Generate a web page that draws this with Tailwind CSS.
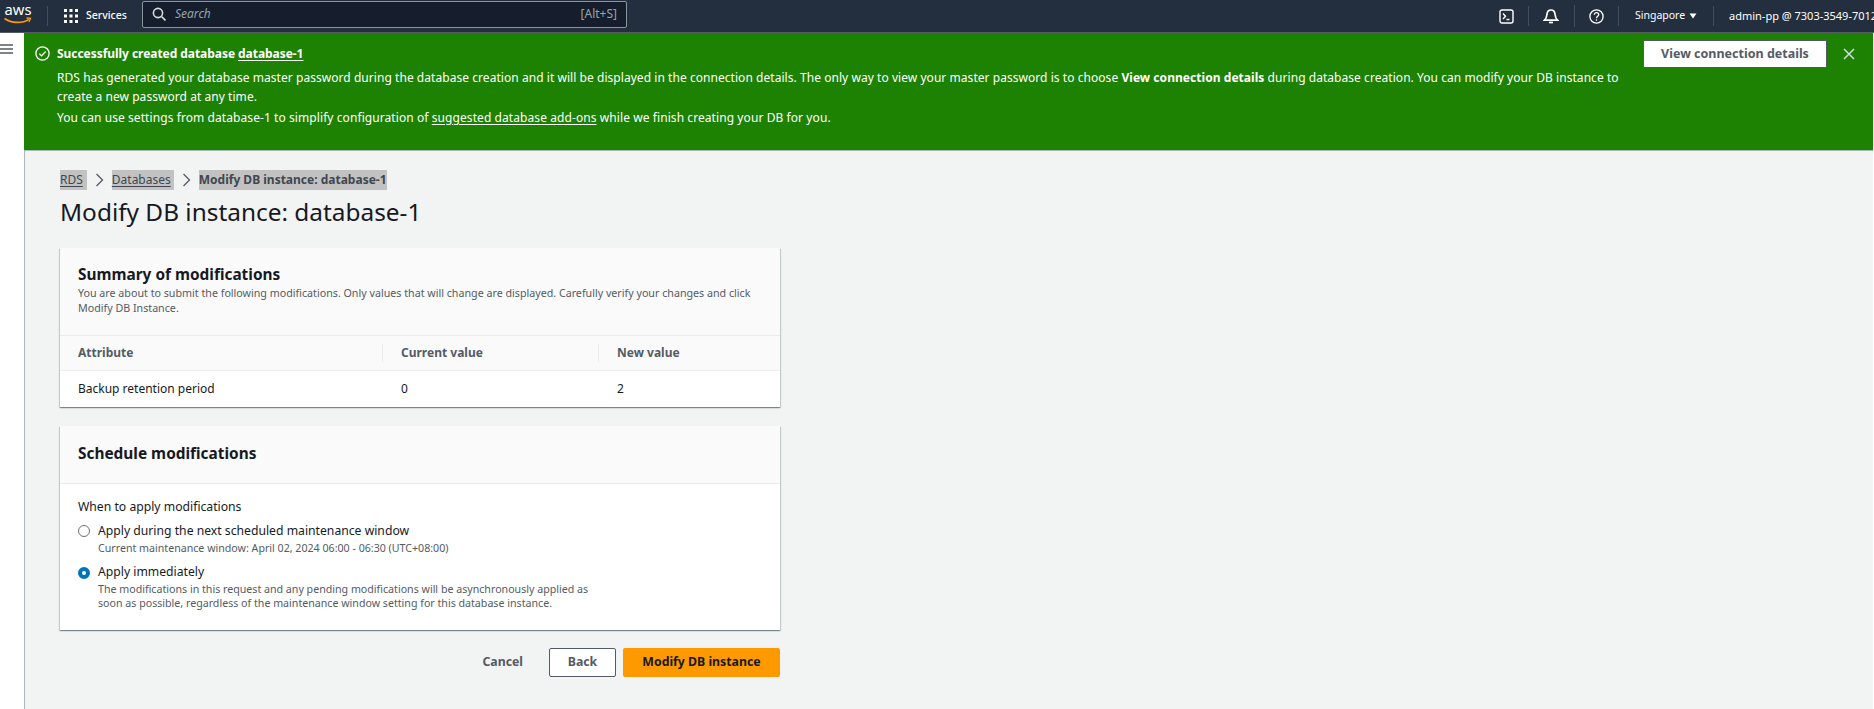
<!doctype html>
<html>
<head>
  <meta charset="UTF-8">
  <meta name="viewport" content="width=device-width, initial-scale=1.0">
  <script src="https://cdn.jsdelivr.net/npm/@tailwindcss/browser@4"></script>
</head>
<body class="bg-white h-[709px] overflow-hidden font-['Noto_Sans',sans-serif] text-[14px] text-[#16191f]">
<!-- top nav -->
<div class="h-[33px] bg-[#232f3e] border-b border-[#545b64] flex items-center text-white overflow-hidden whitespace-nowrap">
  <div class="w-[35px] pl-[4px] shrink-0">
    <svg class="overflow-visible" width="30" height="24" viewBox="0 0 30 24"><text x="0.5" y="11" font-size="15" textLength="27" lengthAdjust="spacingAndGlyphs" fill="#fff" font-family="Noto Sans">aws</text><path d="M0.500 14.500c7 5 18 5 24.500 0.800" fill="none" stroke="#f90" stroke-width="1.600"/><path d="M22.500 14l4 0.400-1.500 3.600" fill="none" stroke="#f90" stroke-width="1.300"/></svg>
  </div>
  <div class="w-px h-[20px] bg-[#414d5c] ml-[12px] shrink-0"></div>
  <svg class="ml-[16px] shrink-0" width="14" height="14" viewBox="0 0 14 14" fill="#fff"><rect x="0" y="0" width="3" height="3"/><rect x="5.500" y="0" width="3" height="3"/><rect x="11" y="0" width="3" height="3"/><rect x="0" y="5.500" width="3" height="3"/><rect x="5.500" y="5.500" width="3" height="3"/><rect x="11" y="5.500" width="3" height="3"/><rect x="0" y="11" width="3" height="3"/><rect x="5.500" y="11" width="3" height="3"/><rect x="11" y="11" width="3" height="3"/></svg>
  <span class="ml-[8px] text-[10.500px] font-medium w-[43px]">Services</span>
  <div class="ml-[13px] w-[485px] h-[27px] -mt-[4px] bg-[#161e2d] border border-[#879596] rounded-[2px] flex items-center px-[9px] shrink-0">
    <svg width="14" height="14" viewBox="0 0 14 14" fill="none" stroke="#d5dbdb" stroke-width="1.600"><circle cx="6" cy="6" r="4.600"/><path d="M9.500 9.500L13.500 13.500"/></svg>
    <span class="ml-[9px] italic text-[12px] text-[#95a5a6]">Search</span>
    <span class="ml-auto text-[12px] text-[#95a5a6]">[Alt+S]</span>
  </div>
  <div class="flex-1"></div>
  <svg class="shrink-0" width="15" height="15" viewBox="0 0 15 15" fill="none" stroke="#fff" stroke-width="1.400"><rect x="1" y="1" width="13" height="13" rx="2"/><path d="M4 4.500l2.500 2.800L4 10M7.500 10.500h3"/></svg>
  <div class="w-px h-[20px] bg-[#414d5c] ml-[14px] shrink-0"></div>
  <svg class="ml-[14px] shrink-0" width="16" height="16" viewBox="0 0 16 16" fill="none" stroke="#fff" stroke-width="1.700"><path d="M1.500 12.200h13c-2-2-2.200-3.200-2.400-5.500C11.900 4 10.300 2 8 2S4.100 4 3.900 6.700c-.2 2.300-.4 3.500-2.400 5.500z"/><path d="M6 14.500h4"/></svg>
  <div class="w-px h-[22px] bg-[#414d5c] ml-[15px] shrink-0"></div>
  <svg class="ml-[14px] shrink-0" width="15" height="15" viewBox="0 0 15 15" fill="none" stroke="#fff" stroke-width="1.300"><circle cx="7.500" cy="7.500" r="6.600"/><path d="M5.300 5.800c0-1.300 1-2.100 2.200-2.100s2.200.8 2.200 2c0 1.600-2.200 1.700-2.200 3.500"/><path d="M7.500 10.300v1.400"/></svg>
  <div class="w-px h-[20px] bg-[#414d5c] ml-[14px] shrink-0"></div>
  <span class="ml-[16px] w-[50px] text-[10.500px]">Singapore</span>
  <svg class="ml-[4px] shrink-0" width="8" height="6" viewBox="0 0 8 6" fill="#fff"><path d="M0.500 0.500h7L4 5.500z"/></svg>
  <div class="w-px h-[20px] bg-[#414d5c] ml-[16px] shrink-0"></div>
  <div class="ml-[15px] w-[145px] shrink-0 overflow-hidden text-[11px]">admin-pp @ 7303-3549-7012</div>
</div>

<div class="flex h-[676px]">
  <!-- sidebar strip -->
  <div class="w-[25px] shrink-0 border-r border-[#aab7b8] pt-[11px]">
    <svg width="13" height="10" viewBox="0 0 13 10" stroke="#545b64" stroke-width="1.600"><path d="M0 1h13M0 5h13M0 9h13"/></svg>
  </div>
  <div class="flex-1 bg-[#f2f3f3] mr-px">
    <!-- flash -->
    <div class="-ml-px h-[118px] bg-[#1d8102] border-b border-[#aab7b8] flex text-white pl-[10px]">
      <svg class="mt-[13px] ml-[1px] shrink-0" width="15" height="15" viewBox="0 0 15 15" fill="none" stroke="#fff" stroke-width="1.300"><circle cx="7.500" cy="7.500" r="6.600"/><path d="M4.400 7.700l2.200 2.200 4-4.400"/></svg>
      <div class="ml-[7px] flex-1 pt-[11px] text-[12px] leading-[20px] tracking-[0.05px]">
        <div class="font-bold h-[24px] tracking-[-0.05px]">Successfully created database <span class="underline underline-offset-2">database-1</span></div>
        <div class="w-[1575px] leading-[19px]">RDS has generated your database master password during the database creation and it will be displayed in the connection details. The only way to view your master password is to choose <b>View connection details</b> during database creation. You can modify your DB instance to create a new password at any time.</div>
        <div class="mt-[3px] leading-[18px] tracking-[0.08px]">You can use settings from database-1 to simplify configuration of <span class="underline underline-offset-2">suggested database add-ons</span> while we finish creating your DB for you.</div>
      </div>
      <div class="mt-[7px] w-[184px] h-[28px] bg-white border border-[#545b64] flex items-center justify-center text-[12.500px] font-bold text-[#545b64] shrink-0">View connection details</div>
      <svg class="mt-[15px] ml-[16px] mr-[18px] shrink-0" width="12" height="12" viewBox="0 0 12 12" stroke="#d5dbdb" stroke-width="1.500"><path d="M1 1l10 10M11 1L1 11"/></svg>
    </div>
    <!-- content -->
    <div class="pl-[35px] w-[755px]">
      <div class="flex items-center h-[20px] mt-[19px] text-[12px] leading-[20px]">
        <span class="bg-[#c2c2c2] pr-[4px] underline underline-offset-2 text-[#414750]">RDS</span>
        <svg class="mx-[8px]" width="9" height="14" viewBox="0 0 9 14" fill="none" stroke="#545b64" stroke-width="1.300"><path d="M1.500 1l6 6-6 6"/></svg>
        <span class="bg-[#c2c2c2] pr-[3px] underline underline-offset-2 text-[#414750]">Databases</span>
        <svg class="mx-[8px]" width="9" height="14" viewBox="0 0 9 14" fill="none" stroke="#545b64" stroke-width="1.300"><path d="M1.500 1l6 6-6 6"/></svg>
        <span class="bg-[#c2c2c2] font-bold text-[#414750]">Modify DB instance: database-1</span>
      </div>
      <h1 class="text-[24.400px] leading-[32px] mt-[6px] font-normal">Modify DB instance: database-1</h1>

      <div class="mt-[20px] bg-white shadow-[0_1px_1px_0_rgba(0,28,36,0.3),1px_1px_1px_0_rgba(0,28,36,0.15),-1px_1px_1px_0_rgba(0,28,36,0.15)]">
        <div class="h-[88px] bg-[#fafafa] border-b border-[#eaeded] px-[18px] pt-[16px]">
          <div class="text-[15.400px] font-bold leading-[22px]">Summary of modifications</div>
          <div class="text-[10.700px] leading-[15px] text-[#545b64]">You are about to submit the following modifications. Only values that will change are displayed. Carefully verify your changes and click Modify DB Instance.</div>
        </div>
        <div class="h-[35px] bg-[#fafafa] border-b border-[#eaeded] flex items-center text-[12px] font-bold text-[#545b64]">
          <div class="w-[323px] pl-[18px] border-r border-[#eaeded] h-[18px] leading-[18px]">Attribute</div>
          <div class="w-[216px] pl-[18px] border-r border-[#eaeded] h-[18px] leading-[18px]">Current value</div>
          <div class="pl-[18px] leading-[18px]">New value</div>
        </div>
        <div class="h-[36px] pb-[1px] flex items-center text-[12px]">
          <div class="w-[323px] pl-[18px]">Backup retention period</div>
          <div class="w-[216px] pl-[18px]">0</div>
          <div class="pl-[18px]">2</div>
        </div>
      </div>

      <div class="mt-[19px] bg-white shadow-[0_1px_1px_0_rgba(0,28,36,0.3),1px_1px_1px_0_rgba(0,28,36,0.15),-1px_1px_1px_0_rgba(0,28,36,0.15)] h-[204px]">
        <div class="h-[58px] pb-[2px] bg-[#fafafa] border-b border-[#eaeded] px-[18px] flex items-center text-[15.400px] font-bold">Schedule modifications</div>
        <div class="px-[18px] pt-[13px] text-[12.200px]">
          <div class="leading-[20px]">When to apply modifications</div>
          <div class="flex mt-[4px]">
            <div class="mt-[4px] w-[12px] h-[12px] rounded-full border border-[#687078] bg-white shrink-0"></div>
            <div class="ml-[8px]">
              <div class="leading-[20px]">Apply during the next scheduled maintenance window</div>
              <div class="text-[10.650px] leading-[15px] text-[#545b64]">Current maintenance window: April 02, 2024 06:00 - 06:30 (UTC+08:00)</div>
            </div>
          </div>
          <div class="flex mt-[6px]">
            <div class="mt-[5px] w-[12px] h-[12px] rounded-full border-[4px] border-[#0073bb] bg-white shrink-0"></div>
            <div class="ml-[8px] w-[500px]">
              <div class="leading-[20px]">Apply immediately</div>
              <div class="text-[10.650px] leading-[14px] text-[#545b64]">The modifications in this request and any pending modifications will be asynchronously applied as soon as possible, regardless of the maintenance window setting for this database instance.</div>
            </div>
          </div>
        </div>
      </div>

      <div class="mt-[18px] flex items-center justify-end text-[12.300px] font-bold">
        <span class="text-[#545b64] mr-[26px]">Cancel</span>
        <div class="w-[67px] h-[29px] bg-white border border-[#545b64] rounded-[2px] flex items-center justify-center text-[#545b64]">Back</div>
        <div class="ml-[7px] w-[157px] h-[29px] bg-[#ff9900] rounded-[2px] flex items-center justify-center text-[#16191f]">Modify DB instance</div>
      </div>
    </div>
  </div>
</div>
</body>
</html>
